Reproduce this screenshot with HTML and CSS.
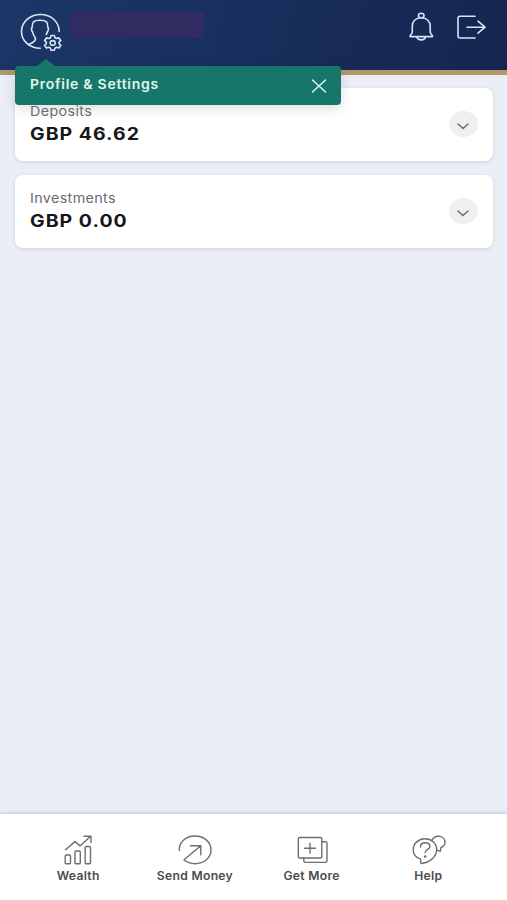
FILE: index.html
```html
<!DOCTYPE html>
<html lang="en">
<head>
  <meta charset="UTF-8" />
  <meta name="viewport" content="width=device-width, initial-scale=1.0" />
  <title>Accounts</title>
  <link rel="stylesheet" href="styles.css">
</head>
<body>
  <header class="topbar">
    <div class="profile">
      <svg class="icon-light" width="44" height="40" viewBox="0 0 44 40">
        <path d="M39.2 19.500C39 9.500 31 2.500 20.500 2.500S1.500 9.900 1.500 19.400s8.200 16.900 18.700 16.900" />
        <path d="M8.500 32.700c4.500-2.500 7-2.800 7-5.700 0-2-2.500-3.500-3-7.500-1.300-.8-1.200-3.200-.3-4.500C12 10 14 8.200 20 8.200s8 1.800 7.800 6.800c.9 1.300.8 3.700-.3 4.500-.2 1.200-.8 2.200-1.300 3" />
        <path d="M31.100 23.500h3.200l.7 2.200 1.500.8 2.400-.6 1.900 2.500-1.700 1.700v1.500l1.700 1.800-1.900 2.500-2.400-.6-1.500.8-.7 2.200h-3.200l-.7-2.200-1.500-.8-2.400.6-1.900-2.500 1.700-1.800v-1.500l-1.700-1.700 1.900-2.500 2.400.6 1.500-.8z" />
        <ellipse cx="32.700" cy="30.900" rx="2.500" ry="2.300" />
      </svg>
      <div class="name"></div>
    </div>
    <div class="actions">
      <svg class="icon-light" width="26" height="31" viewBox="0 0 26 31">
        <ellipse cx="13.200" cy="3.500" rx="2.800" ry="2.300" />
        <path d="M13.200 5.800C7.500 5.800 4.300 9.500 4.300 14v6c0 2-2.300 2.600-2.300 4.600h22.500c0-2-2.300-2.600-2.300-4.600v-6c0-4.500-3.200-8.200-9-8.200z" />
        <path d="M9 25.200c.7 3.600 7.800 3.600 8.500 0" />
      </svg>
      <svg class="icon-light" width="31" height="26" viewBox="0 0 31 26">
        <path d="M19 1.300H4.200Q2 1.300 2 3.300v17.700q0 2 2.200 2H19M11 12.200h18M22 6.200l7 6-7 6" />
      </svg>
    </div>
    <div class="tooltip">
      <span class="text tooltip-text">Profile &amp; Settings</span>
      <svg class="close" width="16" height="14" viewBox="0 0 16 14"><path d="M1.500 1l13 12M14.500 1l-13 12" /></svg>
    </div>
  </header>

  <main class="accounts">
    <section class="card">
      <div>
        <div class="text label">Deposits</div>
        <div class="text amount">GBP 46.62</div>
      </div>
      <div class="toggle">
        <svg width="12" height="7" viewBox="0 0 12 7"><path d="M1 1l5 4.500L11 1" /></svg>
      </div>
    </section>
    <section class="card">
      <div>
        <div class="text label">Investments</div>
        <div class="text amount">GBP 0.00</div>
      </div>
      <div class="toggle">
        <svg width="12" height="7" viewBox="0 0 12 7"><path d="M1 1l5 4.500L11 1" /></svg>
      </div>
    </section>
  </main>

  <nav class="tabs">
    <div class="tab">
      <svg width="34" height="32" viewBox="0 0 34 32">
        <rect x="4.200" y="21" width="5.300" height="8.700" rx="1" />
        <rect x="14" y="17" width="5.300" height="12.700" rx="1" />
        <rect x="24.200" y="12.500" width="5.300" height="17.200" rx="1" />
        <path d="M4.500 15.800L14 7.600l5 4.300 10.300-9.300M23 2.300h7v6.200" />
      </svg>
      <span class="text">Wealth</span>
    </div>
    <div class="tab">
      <svg width="34" height="32" viewBox="0 0 34 32">
        <path d="M1.300 16.500C.8 8.500 7.500 2 17 2s16 6.300 16 14-7 13.700-16 13.700c-4.500 0-8.200-1.300-11-3.900L22.500 12M12.500 11.700h10.300v9" />
      </svg>
      <span class="text">Send Money</span>
    </div>
    <div class="tab">
      <svg width="34" height="32" viewBox="0 0 34 32">
        <rect x="3.300" y="3.500" width="23.500" height="20.500" rx="1.500" />
        <path d="M27 7.700h3.300q1.700 0 1.700 1.500v17.500q0 1.700-1.700 1.700H10.500q-1.700 0-1.700-1.700v-2.500M15 9.200v10M9.500 14.200h11" />
      </svg>
      <span class="text">Get More</span>
    </div>
    <div class="tab">
      <svg width="34" height="32" viewBox="0 0 34 32">
        <path d="M8.500 25.200C3.500 23.300 1.200 19.500 1.200 15.700 1.200 9.500 6.500 4.700 13 4.700s11.700 4.700 11.700 10.800c0 7.500-7.500 13.500-15.700 14zM20 6.400C21 3.600 23.500 2.200 26.300 2.200c4 0 6.700 2.600 6.700 6 0 2.500-1.500 4.300-4 5.300l-.7 3.800-3.700-1.500" />
        <path d="M8.500 13c0-5.600 9.500-5.400 9.500-.6 0 3.300-4.800 2.800-4.800 6.400" />
        <circle class="dot" cx="13.200" cy="22.500" r="1.300" />
      </svg>
      <span class="text">Help</span>
    </div>
  </nav>
</body>
</html>
```
FILE: styles.css
```css
* {
  box-sizing: border-box;
}
body {
  margin: 0;
  height: 900px;
  display: flex;
  flex-direction: column;
  background-color: #ebeef6;
  font-family: Inter, "Noto Sans", sans-serif;
}
svg {
  display: block;
  fill: none;
  stroke-linecap: round;
  stroke-linejoin: round;
}
.text {
  display: block;
  width: max-content;
  white-space: nowrap;
  transform: scaleX(1.06);
  transform-origin: left center;
}
.topbar {
  position: relative;
  height: 75px;
  padding: 12px 20px 0 20px;
  display: flex;
  justify-content: space-between;
  align-items: flex-start;
  background: linear-gradient(105deg, #1b3767 0%, #192e5c 50%, #152550 100%);
  border-bottom: 5px solid #b0986a;
}
.profile {
  display: flex;
  gap: 6px;
}
.name {
  width: 134px;
  height: 26px;
  background: #302b60;
}
.icon-light {
  stroke: #d7e5f6;
  stroke-width: 1.6;
}
.actions {
  display: flex;
  gap: 22px;
}
.actions svg + svg {
  margin-top: 3px;
}
.tooltip {
  position: absolute;
  top: 66px;
  left: 15px;
  width: 326px;
  height: 39px;
  padding: 0 14px 3px 15px;
  display: flex;
  align-items: center;
  justify-content: space-between;
  background: #17766a;
  border-radius: 4px;
  box-shadow: 0 4px 14px rgba(0, 0, 0, 0.13);
}
.tooltip::before {
  content: "";
  position: absolute;
  top: -7px;
  left: 22px;
  border: solid transparent;
  border-width: 0 9px 7px;
  border-bottom-color: #17766a;
}
.tooltip-text {
  color: #e0f6ee;
  font-size: 13.2px;
  font-weight: 600;
  letter-spacing: 0.7px;
}
.close {
  margin-top: 3px;
  stroke: #e0f6ee;
  stroke-width: 1.5;
}
.accounts {
  flex: 1;
  padding: 12.5px 14.5px 0 15px;
  display: flex;
  flex-direction: column;
  gap: 13.5px;
}
.card {
  height: 73.5px;
  padding: 0 15px;
  display: flex;
  align-items: center;
  justify-content: space-between;
  background: #fff;
  border-radius: 8px;
  box-shadow: 0 1px 4px rgba(0, 0, 0, 0.12);
}
.label {
  color: #6a6b70;
  font-size: 13.5px;
  line-height: 20px;
  letter-spacing: 0.35px;
  margin-top: -1px;
  margin-bottom: 1px;
}
.amount {
  color: #17171b;
  font-size: 17px;
  font-weight: 650;
  line-height: 24px;
  letter-spacing: 0.9px;
  transform: scaleX(1.145);
}
.toggle {
  width: 29px;
  height: 26px;
  display: flex;
  align-items: center;
  justify-content: center;
  background: #efefef;
  border-radius: 50%;
}
.toggle svg {
  margin-top: 4px;
  stroke: #66686b;
  stroke-width: 1.4;
}
.tabs {
  height: 86px;
  padding: 20px 20px 0;
  display: grid;
  grid-template-columns: repeat(4, 1fr);
  background: #fff;
  box-shadow: 0 -1px 4px rgba(0, 0, 0, 0.16);
}
.tab {
  display: flex;
  flex-direction: column;
  align-items: center;
  color: #494c50;
  font-size: 11.5px;
  font-weight: 600;
  line-height: 20px;
  letter-spacing: 0.25px;
}
.tab svg {
  stroke: #6b6f73;
  stroke-width: 1.4;
}
.tab .text {
  transform-origin: center;
}
.tab .dot {
  fill: #6b6f73;
  stroke: none;
}
```
